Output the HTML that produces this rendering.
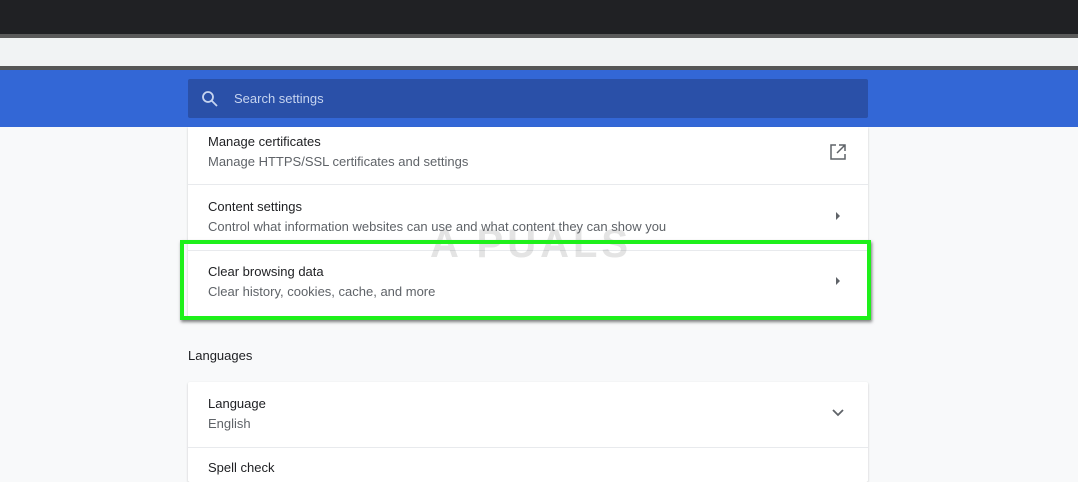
<!DOCTYPE html><html><head><style>
body{margin:0;width:1078px;height:468px;overflow:hidden;background:#f8f9fa;font-family:"Liberation Sans",sans-serif;position:relative}
.a{position:absolute}
.t{font-size:13px;color:#202124}.s{font-size:13px;color:#5f6368}
</style></head><body>
<div class="a" style="left:0;top:0;width:1078px;height:34px;background:#202124"></div>
<div class="a" style="left:0;top:34px;width:1078px;height:4px;background:#5a5a5a"></div>
<div class="a" style="left:0;top:38px;width:1078px;height:28px;background:#f1f3f4"></div>
<div class="a" style="left:0;top:66px;width:1078px;height:4px;background:#555"></div>
<div class="a" style="left:0;top:70px;width:1078px;height:57px;background:#3367d6"></div>
<div class="a" style="left:188px;top:79px;width:680px;height:39px;background:#2a50a8;border-radius:2px"></div>
<svg class="a" style="left:201px;top:90px" width="18" height="18" viewBox="0 0 18 18"><circle cx="7" cy="7" r="5" fill="none" stroke="#c6d4f0" stroke-width="1.8"/><path d="M10.5 10.5L16 16" stroke="#c6d4f0" stroke-width="1.8"/></svg>
<div class="a" style="left:234px;top:91px;font-size:13px;color:#c6d4f0">Search settings</div>
<div class="a" style="left:188px;top:127px;width:680px;height:190px;background:#fff;box-shadow:0 1px 2px rgba(0,0,0,.2)"></div>
<div class="a t" style="left:208px;top:134px">Manage certificates</div>
<div class="a s" style="left:208px;top:154px">Manage HTTPS/SSL certificates and settings</div>
<svg class="a" style="left:829px;top:143px" width="18" height="18" viewBox="0 0 18 18"><path d="M7 2H2v14h14v-5M10 2h6v6M16 2L8 10" fill="none" stroke="#5f6368" stroke-width="1.5"/></svg>
<div class="a" style="left:188px;top:184px;width:680px;height:1px;background:#e8eaed"></div>
<div class="a t" style="left:208px;top:199px">Content settings</div>
<div class="a s" style="left:208px;top:219px">Control what information websites can use and what content they can show you</div>
<svg class="a" style="left:834px;top:211px" width="8" height="10"><path d="M2 1l4 4-4 4z" fill="#5f6368"/></svg>
<div class="a" style="left:188px;top:250px;width:680px;height:1px;background:#e8eaed"></div>
<div class="a" style="left:430px;top:222px;font-size:40px;font-weight:bold;color:rgba(120,120,120,.2);letter-spacing:4px">A PUALS</div>
<div class="a t" style="left:208px;top:264px">Clear browsing data</div>
<div class="a s" style="left:208px;top:284px">Clear history, cookies, cache, and more</div>
<svg class="a" style="left:834px;top:276px" width="8" height="10"><path d="M2 1l4 4-4 4z" fill="#5f6368"/></svg>
<div class="a" style="left:180px;top:240px;width:683px;height:72px;border:4px solid #1ef01a;box-shadow:1px 2px 3px rgba(0,0,0,.5)"></div>
<div class="a" style="left:188px;top:348px;font-size:13px;color:#202124">Languages</div>
<div class="a" style="left:188px;top:382px;width:680px;height:100px;background:#fff;box-shadow:0 1px 2px rgba(0,0,0,.2);border-radius:2px"></div>
<div class="a t" style="left:208px;top:396px">Language</div>
<div class="a s" style="left:208px;top:416px">English</div>
<svg class="a" style="left:831px;top:408px" width="14" height="10"><path d="M2 2l5 5 5-5" fill="none" stroke="#5f6368" stroke-width="1.8"/></svg>
<div class="a" style="left:188px;top:447px;width:680px;height:1px;background:#e8eaed"></div>
<div class="a t" style="left:208px;top:460px">Spell check</div>
</body></html>
